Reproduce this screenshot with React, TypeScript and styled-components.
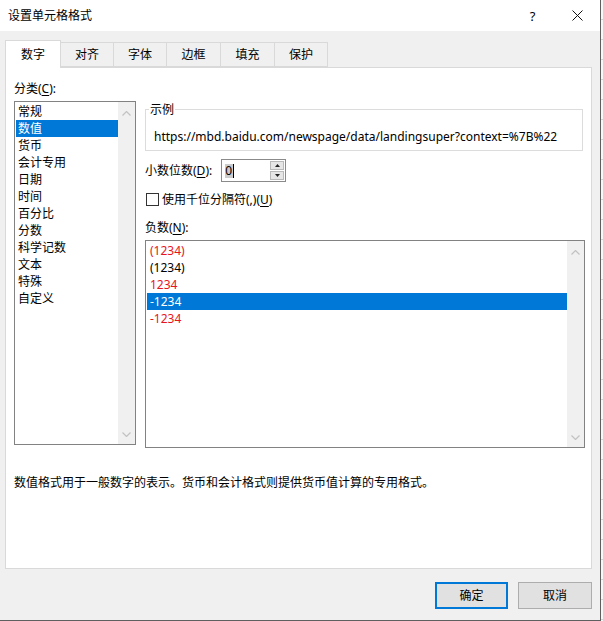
import React from "react";
import styled, { createGlobalStyle } from "styled-components";

const Global = createGlobalStyle`
  html, body { margin: 0; padding: 0; background: #fff; }
  body {
    width: 603px; height: 621px; overflow: hidden;
    font-family: "Noto Sans", "Noto Sans CJK SC", sans-serif;
    font-size: 12px; color: #000;
  }
  #root { width: 603px; height: 621px; }
  * { box-sizing: border-box; }
`;

const Screen = styled.div`
  display: flex;
  width: 603px;
  height: 621px;
`;

const Dialog = styled.div`
  width: 601px;
  height: 621px;
  border-right: 1px solid #5f5f5f;
  border-bottom: 1px solid #5f5f5f;
  display: flex;
  flex-direction: column;
  background: #f0f0f0;
`;

const Sheet = styled.div`
  flex: 1;
  background: repeating-linear-gradient(to bottom, #f7f7f7 0 19px, #d4d4d4 19px 20px);
`;

const TitleBar = styled.div`
  height: 31px;
  background: #fff;
  display: flex;
  align-items: center;
  padding-left: 8px;
`;

const Title = styled.div`
  flex: 1;
  line-height: 17px;
`;

const TitleButton = styled.div`
  width: 45px;
  height: 31px;
  display: flex;
  align-items: center;
  justify-content: center;
  font-size: 13px;
`;

const Body = styled.div`
  flex: 1;
  display: flex;
  flex-direction: column;
  padding: 9px 8px 0 5px;
`;

const TabStrip = styled.div`
  display: flex;
  align-items: flex-end;
  height: 28px;
  margin-bottom: -1px;
  position: relative;
  z-index: 1;
`;

const Tab = styled.div<{ $active?: boolean; $w: number }>`
  width: ${(p) => p.$w}px;
  height: ${(p) => (p.$active ? 28 : 25)}px;
  margin-bottom: ${(p) => (p.$active ? 0 : 1)}px;
  margin-left: ${(p) => (p.$active ? 0 : -1)}px;
  border: 1px solid #d9d9d9;
  border-bottom: ${(p) => (p.$active ? "none" : "1px solid #d9d9d9")};
  background: ${(p) => (p.$active ? "#fff" : "#f0f0f0")};
  display: flex;
  align-items: center;
  justify-content: center;
  line-height: 17px;
  position: relative;
  z-index: ${(p) => (p.$active ? 2 : 0)};
`;

const Panel = styled.div`
  height: 502px;
  border: 1px solid #d9d9d9;
  background: #fff;
  padding: 12px 6px 0 8px;
`;

const PanelGrid = styled.div`
  display: grid;
  grid-template-columns: 122px 1fr;
  column-gap: 9px;
  align-items: start;
`;

const Column = styled.div<{ $top?: number }>`
  display: flex;
  flex-direction: column;
  min-width: 0;
  padding-top: ${(p) => p.$top ?? 0}px;
`;

const Label = styled.div<{ $gap?: number; $top?: number }>`
  line-height: 17px;
  margin-top: ${(p) => p.$top ?? 0}px;
  margin-bottom: ${(p) => p.$gap ?? 0}px;
  white-space: nowrap;
`;

const Key = styled.span`
  text-decoration: underline;
  text-underline-offset: 2px;
`;

const ListBox = styled.div<{ $h: number }>`
  height: ${(p) => p.$h}px;
  border: 1px solid #828282;
  background: #fff;
  display: flex;
`;

const Items = styled.div`
  flex: 1;
  padding: 1px 0 0 1px;
  min-width: 0;
`;

const ListItem = styled.div<{ $selected?: boolean; $red?: boolean }>`
  height: 17px;
  line-height: 17px;
  padding-left: 2px;
  white-space: nowrap;
  background: ${(p) => (p.$selected ? "#0078d7" : "transparent")};
  color: ${(p) => (p.$selected ? "#fff" : p.$red ? "#e8141c" : "#000")};
`;

const NumItem = styled(ListItem)`
  padding-left: 3px;
`;

const ScrollTrack = styled.div`
  width: 17px;
  background: #f0f0f0;
  display: flex;
  flex-direction: column;
  justify-content: space-between;
  align-items: center;
  padding: 9px 0 7px;
`;

const GroupBox = styled.fieldset`
  margin: 0 2px 0 0;
  padding: 0 8px 5px;
  border: 1px solid #dcdcdc;
  min-width: 0;
`;

const Legend = styled.legend`
  padding: 0 1px;
  margin-left: -5px;
  line-height: 17px;
`;

const SampleText = styled.div`
  line-height: 17px;
  padding-top: 10px;
  white-space: nowrap;
  overflow: hidden;
`;

const DecimalRow = styled.div`
  display: flex;
  align-items: center;
  gap: 9px;
  margin-top: 8px;
`;

const Spinner = styled.div`
  width: 65px;
  height: 23px;
  border: 1px solid #8a8a8a;
  background: #fff;
  display: flex;
`;

const SpinValue = styled.div`
  flex: 1;
  display: flex;
  align-items: center;
  padding-left: 3px;
`;

const Selected = styled.span`
  background: #cccccc;
  line-height: 14px;
  padding: 0 1px 0 0;
  border-right: 1px solid #000;
`;

const SpinButtons = styled.div`
  width: 15px;
  display: flex;
  flex-direction: column;
  gap: 1px;
  padding: 1px 1px 1px 0;
`;

const SpinButton = styled.div`
  flex: 1;
  background: #e6e6e6;
  border: 1px solid #b9b9b9;
  display: flex;
  align-items: center;
  justify-content: center;
`;

const CheckRow = styled.div`
  display: flex;
  align-items: center;
  gap: 3px;
  margin-top: 9px;
  line-height: 17px;
`;

const CheckBox = styled.div`
  width: 13px;
  height: 13px;
  margin-left: 1px;
  border: 1px solid #333;
  background: #fff;
`;

const Description = styled.div`
  margin-top: 26px;
  line-height: 17px;
  white-space: nowrap;
`;

const Footer = styled.div`
  display: flex;
  justify-content: flex-end;
  gap: 10px;
  padding-top: 13px;
`;

const Button = styled.div<{ $primary?: boolean; $w: number }>`
  width: ${(p) => p.$w}px;
  height: 27px;
  background: #e1e1e1;
  border: ${(p) => (p.$primary ? "2px solid #0078d7" : "1px solid #adadad")};
  display: flex;
  align-items: center;
  justify-content: center;
  line-height: 17px;
`;

const Chevron = ({ up }: { up?: boolean }) => (
  <svg width="9" height="5" viewBox="0 0 9 5">
    <polyline
      points={up ? "0.5,4.5 4.5,0.5 8.5,4.5" : "0.5,0.5 4.5,4.5 8.5,0.5"}
      fill="none"
      stroke="#c2c2c2"
      strokeWidth="1.2"
    />
  </svg>
);

const Tri = ({ up }: { up?: boolean }) => (
  <svg width="5" height="3" viewBox="0 0 5 3">
    <polygon points={up ? "0,3 2.5,0 5,3" : "0,0 2.5,3 5,0"} fill="#222" />
  </svg>
);

const CloseIcon = () => (
  <svg width="11" height="11" viewBox="0 0 11 11">
    <path d="M0.5 0.5 L10.5 10.5 M10.5 0.5 L0.5 10.5" stroke="#111" strokeWidth="1" fill="none" />
  </svg>
);

const tabs: [string, number][] = [
  ["数字", 56],
  ["对齐", 54],
  ["字体", 54],
  ["边框", 55],
  ["填充", 55],
  ["保护", 54],
];

const categories = ["常规", "数值", "货币", "会计专用", "日期", "时间", "百分比", "分数", "科学记数", "文本", "特殊", "自定义"];

const negatives: { text: string; red?: boolean; selected?: boolean }[] = [
  { text: "(1234)", red: true },
  { text: "(1234)" },
  { text: "1234", red: true },
  { text: "-1234", selected: true },
  { text: "-1234", red: true },
];

export default function App() {
  return (
    <Screen>
      <Global />
      <Dialog>
        <TitleBar>
          <Title>设置单元格格式</Title>
          <TitleButton>?</TitleButton>
          <TitleButton>
            <CloseIcon />
          </TitleButton>
        </TitleBar>
        <Body>
          <TabStrip>
            {tabs.map(([t, w], i) => (
              <Tab key={t} $active={i === 0} $w={w}>
                {t}
              </Tab>
            ))}
          </TabStrip>
          <Panel>
            <PanelGrid>
              <Column>
                <Label $gap={4}>
                  分类(<Key>C</Key>):
                </Label>
                <ListBox $h={344}>
                  <Items>
                    {categories.map((c, i) => (
                      <ListItem key={c} $selected={i === 1}>
                        {c}
                      </ListItem>
                    ))}
                  </Items>
                  <ScrollTrack>
                    <Chevron up />
                    <Chevron />
                  </ScrollTrack>
                </ListBox>
              </Column>
              <Column $top={21}>
                <GroupBox>
                  <Legend>示例</Legend>
                  <SampleText>https://mbd.baidu.com/newspage/data/landingsuper?context=%7B%22</SampleText>
                </GroupBox>
                <DecimalRow>
                  <Label>
                    小数位数(<Key>D</Key>):
                  </Label>
                  <Spinner>
                    <SpinValue>
                      <Selected>0</Selected>
                    </SpinValue>
                    <SpinButtons>
                      <SpinButton>
                        <Tri up />
                      </SpinButton>
                      <SpinButton>
                        <Tri />
                      </SpinButton>
                    </SpinButtons>
                  </Spinner>
                </DecimalRow>
                <CheckRow>
                  <CheckBox />
                  <span>
                    使用千位分隔符(,)(<Key>U</Key>)
                  </span>
                </CheckRow>
                <Label $top={11} $gap={4}>
                  负数(<Key>N</Key>):
                </Label>
                <ListBox $h={208}>
                  <Items>
                    {negatives.map((n, i) => (
                      <NumItem key={i} $red={n.red} $selected={n.selected}>
                        {n.text}
                      </NumItem>
                    ))}
                  </Items>
                  <ScrollTrack>
                    <Chevron up />
                    <Chevron />
                  </ScrollTrack>
                </ListBox>
              </Column>
            </PanelGrid>
            <Description>数值格式用于一般数字的表示。货币和会计格式则提供货币值计算的专用格式。</Description>
          </Panel>
          <Footer>
            <Button $primary $w={73}>
              确定
            </Button>
            <Button $w={74}>取消</Button>
          </Footer>
        </Body>
      </Dialog>
      <Sheet />
    </Screen>
  );
}
